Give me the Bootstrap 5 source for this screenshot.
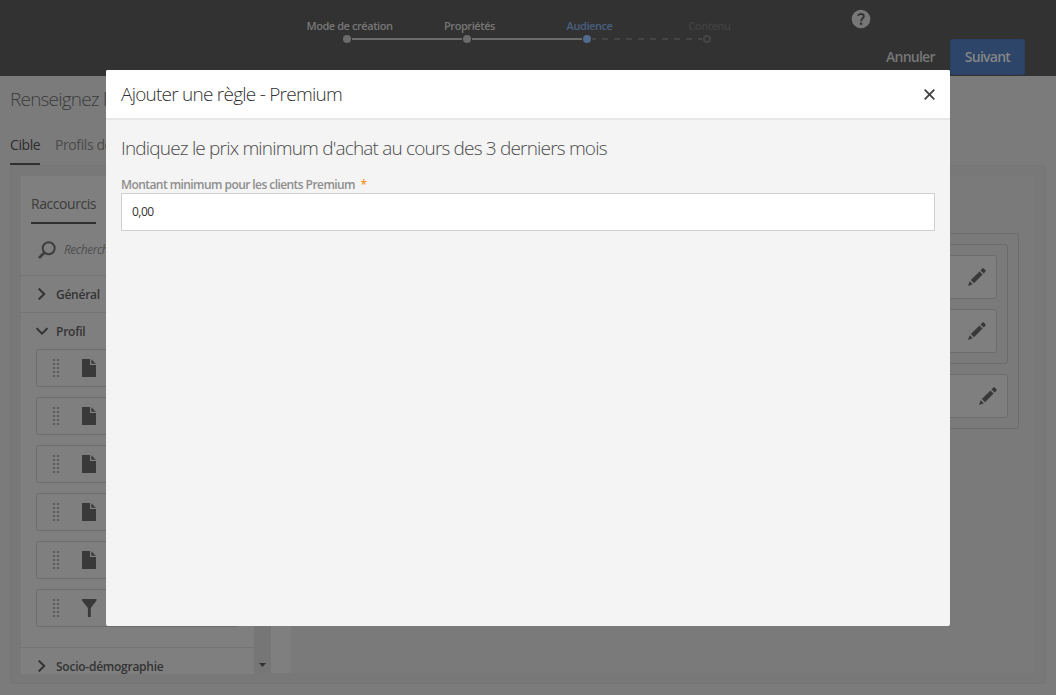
<!DOCTYPE html>
<html lang="fr">
<head>
<meta charset="utf-8">
<title>Ajouter une règle - Premium</title>
<link href="https://cdn.jsdelivr.net/npm/bootstrap@5.3.0/dist/css/bootstrap.min.css" rel="stylesheet">
<style>
body{font-family:"Open Sans","Noto Sans",sans-serif;font-size:12px;line-height:18px;background:#7b7b7b;color:#3b3b3b;height:695px;overflow:hidden;white-space:nowrap}
svg{display:block;flex:none}
.topbar{height:76px;background:#323232;color:#777}
.stepper{padding-left:287px;padding-top:17px;width:767px}
.step{width:120px;flex:none;font-size:11px;font-weight:600;text-align:center;letter-spacing:-.43px}
.step div{padding-left:5px}
.step svg{margin-top:-1px}
.step .current{color:#49607f}
.step .todo{color:#414141}
.actions{width:289px}
.help{padding:9px 0 0 84px;height:48px}
.cancel{padding-left:119px;font-size:14px;font-weight:600;letter-spacing:-.75px}
.next{left:950px;top:39px;width:75px;height:36px;background:#2c4569;border:1px solid #2a4165;border-radius:2px;color:#858585;font-size:14px;font-weight:600;letter-spacing:-.75px;padding:0}
.pagetitle{height:48px;width:106px;overflow:hidden;padding:10px 0 0 10px;font-size:19px;font-weight:300;line-height:27px;letter-spacing:-.8px}
.tabs{height:41px;padding-left:10px;gap:15px;font-size:14px;line-height:20px;letter-spacing:-.4px;color:#4b4b4b}
.tabs>div{padding-top:11px}
.tabs>.on{width:30px;flex:none;color:#2d2d2d;border-bottom:2px solid #303030}
.frame{width:1036px;height:519px;margin-left:10px;padding:10px;background:#787878;border:1px solid #757575;border-radius:3px}
.palette{width:233px;height:498px;background:#7f7f7f;overflow:hidden}
.short{margin-left:10px;width:65px;height:48px;border-bottom:2px solid #303030;padding-top:18px;font-size:14px;line-height:20px;letter-spacing:-.45px}
.search{height:51px;padding:1px 0 0 17px;gap:8px;font-style:italic;color:#505050;letter-spacing:-.5px}
.group{height:37px;border-top:1px solid #747474;padding:1px 0 0 15px;gap:8px;font-weight:600;letter-spacing:-.25px;color:#333}
.group svg{margin-top:-1px}
.group.after{margin-top:20px}
.entry{width:203px;height:38px;margin:0 0 10px 15px;border:1px solid #6c6c6c;border-radius:3px;padding-left:16px;gap:21px}
.entry:nth-last-child(2){margin-bottom:0}
.scroll{width:17px;background:#767676;padding:0 0 5px 4px}
.gutter{width:20px;background:#7f7f7f}
.canvas{flex:1;background:#7a7a7a;padding:57px 16px 0 16px}
.rulebox{border:1px solid #6c6c6c;border-radius:3px;padding:10px}
.rule{height:44px;border:1px solid #6c6c6c;border-radius:3px;background:#7f7f7f;padding-right:10px}
.rule.spaced,.rulebox.spaced{margin-bottom:10px}
.dialog{left:106px;top:70px;width:844px;height:556px;background:#f4f4f4;border-radius:2px;overflow:hidden}
.dhead{height:50px;background:#fff;border-bottom:2px solid #e7e7e7;padding:0 15px;font-size:19px;font-weight:300;color:#323232;letter-spacing:-.76px}
.dbody{padding:13px 15px 0}
.dbody h2{font-size:19px;font-weight:300;line-height:30px;color:#4b4b4b;margin:0;letter-spacing:-.82px}
.dbody label{display:block;height:18px;margin-top:12px;line-height:20px;font-size:12px;font-weight:600;color:#8e8e8e;letter-spacing:-.57px}
.star{color:#f29423;margin-left:3px}
.amount{height:38px;border:1px solid #d0d0d0;border-radius:0;padding:0 10px 2px;font-size:12px;color:#323232;letter-spacing:-.5px;background:#fff}
</style>
</head>
<body>
<svg width="0" height="0" class="position-absolute">
<defs>
<symbol id="pencil" viewBox="0 0 18 18"><path fill="#393939" d="M0 18l1.700-4.800 3.100 3.100zM2.800 12L11.500 3.400l3.100 3.100L6 15.200zM12.500 2.400L14.300.6c.5-.5 1-.5 1.500 0l1.600 1.600c.5.500.5 1 0 1.500l-1.800 1.800z"/></symbol>
<symbol id="doc" viewBox="0 0 14 18"><path fill="#393939" d="M0 0h8v6h6v12H0zM9.300.3L13.800 4.800H9.300z"/></symbol>
<symbol id="grip" viewBox="0 0 8 18"><path stroke="#5b5b5b" stroke-width="2" stroke-dasharray="2 2" d="M1 0v18M5 0v18"/></symbol>
<symbol id="right" viewBox="0 0 12 12"><path fill="none" stroke="#333" stroke-width="2" d="M2.700.6L8.200 6l-5.500 5.400"/></symbol>
<symbol id="down" viewBox="0 0 12 12"><path fill="none" stroke="#333" stroke-width="2" d="M.6 3.200L6 8.600l5.400-5.400"/></symbol>
</defs>
</svg>

<header class="topbar d-flex">
  <div class="stepper d-flex">
    <div class="step"><div>Mode de création</div><svg width="120" height="10"><circle cx="60" cy="5" r="4" fill="#6b6b6b"/><path stroke="#6b6b6b" stroke-width="2" d="M65 5h55"/></svg></div>
    <div class="step"><div>Propriétés</div><svg width="120" height="10"><circle cx="60" cy="5" r="4" fill="#6b6b6b"/><path stroke="#6b6b6b" stroke-width="2" d="M0 5h55M65 5h55"/></svg></div>
    <div class="step"><div class="current">Audience</div><svg width="120" height="10"><circle cx="60" cy="5" r="4" fill="#526b8c"/><path stroke="#6b6b6b" stroke-width="2" d="M0 5h55"/><path stroke="#454545" stroke-width="2" d="M65 5h4"/><path stroke="#454545" stroke-width="2" stroke-dasharray="6 6" d="M75 5h45"/></svg></div>
    <div class="step"><div class="todo">Contenu</div><svg width="120" height="10"><path stroke="#454545" stroke-width="2" stroke-dasharray="6 6" d="M3 5h52"/><circle cx="60" cy="5" r="3.100" fill="none" stroke="#454545" stroke-width="2"/></svg></div>
  </div>
  <div class="actions">
    <div class="help"><svg width="20" height="20"><circle cx="10" cy="10" r="9.300" fill="#777"/><path fill="none" stroke="#323232" stroke-width="1.900" d="M7 6.800C7.800 4.200 12.800 4.300 12.800 7.200c0 2.100-2.700 2.300-2.700 5"/><circle cx="10.100" cy="14.800" r="1.300" fill="#323232"/></svg></div>
    <div class="cancel">Annuler</div>
  </div>
</header>
<button class="next position-absolute">Suivant</button>

<main>
  <div class="pagetitle">Renseignez l</div>
  <div class="tabs d-flex"><div class="on">Cible</div><div>Profils de</div></div>
  <div class="frame d-flex">
    <section class="palette">
      <div class="short">Raccourcis</div>
      <div class="search d-flex align-items-center"><svg width="18" height="18"><circle cx="10.700" cy="7.200" r="6" fill="none" stroke="#3d3d3d" stroke-width="2"/><path stroke="#3d3d3d" stroke-width="2.600" d="M6.500 11.500L1 17"/></svg>Recherch</div>
      <div class="group d-flex align-items-center"><svg width="12" height="12"><use href="#right"/></svg>Général</div>
      <div class="group d-flex align-items-center"><svg width="12" height="12"><use href="#down"/></svg>Profil</div>
      <div class="entry d-flex align-items-center"><svg width="8" height="18"><use href="#grip"/></svg><svg width="14" height="18"><use href="#doc"/></svg></div>
      <div class="entry d-flex align-items-center"><svg width="8" height="18"><use href="#grip"/></svg><svg width="14" height="18"><use href="#doc"/></svg></div>
      <div class="entry d-flex align-items-center"><svg width="8" height="18"><use href="#grip"/></svg><svg width="14" height="18"><use href="#doc"/></svg></div>
      <div class="entry d-flex align-items-center"><svg width="8" height="18"><use href="#grip"/></svg><svg width="14" height="18"><use href="#doc"/></svg></div>
      <div class="entry d-flex align-items-center"><svg width="8" height="18"><use href="#grip"/></svg><svg width="14" height="18"><use href="#doc"/></svg></div>
      <div class="entry d-flex align-items-center"><svg width="8" height="18"><use href="#grip"/></svg><svg width="15" height="18"><path fill="#393939" d="M0 0h14.500v1.500L8.800 9v9H5.900V9L0 1.500z"/></svg></div>
      <div class="group after d-flex align-items-center"><svg width="12" height="12"><use href="#right"/></svg>Socio-démographie</div>
    </section>
    <div class="scroll d-flex align-items-end"><svg width="9" height="5"><path fill="#333" d="M1 0h7L4.500 4z"/></svg></div>
    <div class="gutter"></div>
    <section class="canvas">
      <div class="rulebox">
        <div class="rulebox spaced">
          <div class="rule spaced d-flex align-items-center justify-content-end"><svg width="18" height="18"><use href="#pencil"/></svg></div>
          <div class="rule d-flex align-items-center justify-content-end"><svg width="18" height="18"><use href="#pencil"/></svg></div>
        </div>
        <div class="rule d-flex align-items-center justify-content-end"><svg width="18" height="18"><use href="#pencil"/></svg></div>
      </div>
    </section>
  </div>
</main>

<div class="dialog position-absolute" role="dialog">
  <div class="dhead d-flex align-items-center justify-content-between"><span>Ajouter une règle - Premium</span><svg width="11" height="11"><path stroke="#444" stroke-width="1.900" d="M.7.700l9.600 9.600M10.300.700L.7 10.300"/></svg></div>
  <div class="dbody">
    <h2>Indiquez le prix minimum d'achat au cours des 3 derniers mois</h2>
    <label for="amount">Montant minimum pour les clients Premium <span class="star">*</span></label>
    <input id="amount" class="form-control amount" value="0,00">
  </div>
</div>
<script src="https://cdn.jsdelivr.net/npm/bootstrap@5.3.0/dist/js/bootstrap.bundle.min.js"></script>
</body>
</html>
